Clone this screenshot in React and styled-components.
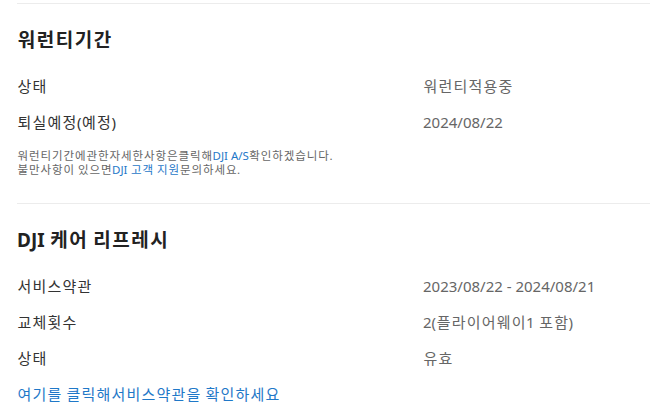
import React from "react";
import styled, { createGlobalStyle } from "styled-components";

const Global = createGlobalStyle`
  html, body { margin: 0; padding: 0; background: #fff; }
  body {
    font-family: "Noto Sans", "Noto Sans CJK KR", sans-serif;
    color: #333;
  }
`;

/* Each Hangul syllable sits in a full-width (1em) cell, as in fixed-pitch Korean type */
const Syl = styled.span`
  display: inline-block;
  width: 1em;
  text-align: center;
  line-height: 1;
  font-family: "Noto Sans CJK KR", sans-serif;
`;

const HANGUL = /[\u1100-\u11FF\u3130-\u318F\uAC00-\uD7A3]/;

function kr(text) {
  const out = [];
  let buf = "";
  [...text].forEach((ch, i) => {
    if (HANGUL.test(ch)) {
      if (buf) out.push(buf);
      buf = "";
      out.push(<Syl key={i}>{ch}</Syl>);
    } else {
      buf += ch;
    }
  });
  if (buf) out.push(buf);
  return out;
}

const Page = styled.div`
  padding: 3px 0 0 17px;
`;

const Section = styled.section`
  border-top: 1px solid #ececec;
  padding: 24px 0 ${(p) => p.$bottom || 0}px;
`;

const Title = styled.h2`
  margin: 0 0 16px;
  font-size: 19px;
  line-height: 24px;
  font-weight: 700;
  color: #222;
`;

const Row = styled.div`
  display: grid;
  grid-template-columns: 406px 1fr;
  height: 36px;
  align-items: center;
  font-size: 15px;
  line-height: 20px;
`;

const Label = styled.span`
  color: #333;
`;

const Value = styled.span`
  color: #666;
`;

const Note = styled.p`
  margin: 9px 0 0;
  font-size: 11.5px;
  line-height: 14px;
  color: #666;
`;

const Link = styled.a`
  color: #1f78c8;
  text-decoration: none;
  cursor: pointer;
`;

const LinkRow = styled.div`
  height: 36px;
  display: flex;
  align-items: center;
  font-size: 15px;
  line-height: 20px;
`;

const warranty = [
  ["상태", "워런티적용중"],
  ["퇴실예정(예정)", "2024/08/22"],
];

const care = [
  ["서비스약관", "2023/08/22 - 2024/08/21"],
  ["교체횟수", "2(플라이어웨이1 포함)"],
  ["상태", "유효"],
];

export default function App() {
  return (
    <Page>
      <Global />
      <Section $bottom={26}>
        <Title>{kr("워런티기간")}</Title>
        {warranty.map(([k, v]) => (
          <Row key={k}>
            <Label>{kr(k)}</Label>
            <Value>{kr(v)}</Value>
          </Row>
        ))}
        <Note>
          {kr("워런티기간에관한자세한사항은클릭해")}
          <Link>DJI A/S</Link>
          {kr("확인하겠습니다.")}
          <br />
          {kr("불만사항이 있으면")}
          <Link>{kr("DJI 고객 지원")}</Link>
          {kr("문의하세요.")}
        </Note>
      </Section>
      <Section>
        <Title>{kr("DJI 케어 리프레시")}</Title>
        {care.map(([k, v]) => (
          <Row key={k}>
            <Label>{kr(k)}</Label>
            <Value>{kr(v)}</Value>
          </Row>
        ))}
        <LinkRow>
          <Link>{kr("여기를 클릭해서비스약관을 확인하세요")}</Link>
        </LinkRow>
      </Section>
    </Page>
  );
}
